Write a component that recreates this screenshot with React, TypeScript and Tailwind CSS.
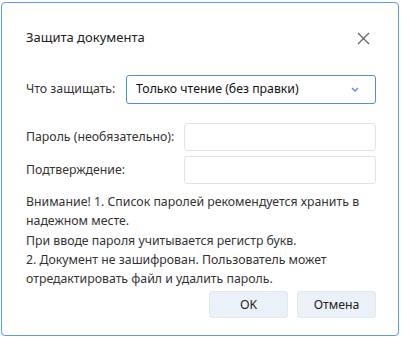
import React from "react";

const Field = ({ label, top }: { label: string; top: string }) => (
    <div className={`flex items-center ${top}`}>
        <span className="w-[158px] shrink-0">{label}</span>
        <div className="h-[28px] flex-1 rounded-[3px] border border-[#e3e3e3] bg-white" />
    </div>
);

export default function App() {
    return (
        <div className="min-h-screen bg-white text-[12.3px] text-[#333]" style={{ fontFamily: '"Noto Sans", "Open Sans", sans-serif' }}>
            <div className="ml-px mt-[2px] flex h-[334px] w-[398px] flex-col rounded-[4px] border border-[#5b9cf2] pl-6 pr-[22px]">
                {/* Header */}
                <div className="mt-[25px] flex h-5 items-center justify-between">
                    <span className="text-[13px] text-[#222]">Защита документа</span>
                    <svg width="13" height="13" viewBox="0 0 13 13" className="mr-[6px]">
                        <path d="M1 1 L12 12 M12 1 L1 12" stroke="#666" strokeWidth="1.3" />
                    </svg>
                </div>

                {/* What to protect */}
                <div className="mt-[27px] flex items-center">
                    <span className="w-[100px] shrink-0">Что защищать:</span>
                    <div className="flex h-[29px] flex-1 items-center justify-between rounded-[3px] border border-[#4d8fe6] pl-[9px] pr-[16px] text-[#111]">
                        <span>Только чтение (без правки)</span>
                        <svg width="8" height="5" viewBox="0 0 8 5">
                            <path d="M1 1 L4 4 L7 1" fill="none" stroke="#4a8ee6" strokeWidth="1.4" />
                        </svg>
                    </div>
                </div>

                <Field label="Пароль (необязательно):" top="mt-[19px]" />
                <Field label="Подтверждение:" top="mt-[5px]" />

                {/* Notice */}
                <p className="mt-[8px] leading-[19.25px]">
                    Внимание! 1. Список паролей рекомендуется хранить в
                    <br />
                    надежном месте.
                    <br />
                    При вводе пароля учитывается регистр букв.
                    <br />
                    2. Документ не зашифрован. Пользователь может
                    <br />
                    отредактировать файл и удалить пароль.
                </p>

                {/* Buttons */}
                <div className="mt-[3px] flex justify-end gap-[9px]">
                    <button className="h-[27px] w-[79px] rounded-[3px] border border-[#e1e8f0] bg-[#eaf1f9] text-[#222]">OK</button>
                    <button className="h-[27px] w-[79px] rounded-[3px] border border-[#e1e8f0] bg-[#eaf1f9] text-[#222]">Отмена</button>
                </div>
            </div>
        </div>
    );
}
